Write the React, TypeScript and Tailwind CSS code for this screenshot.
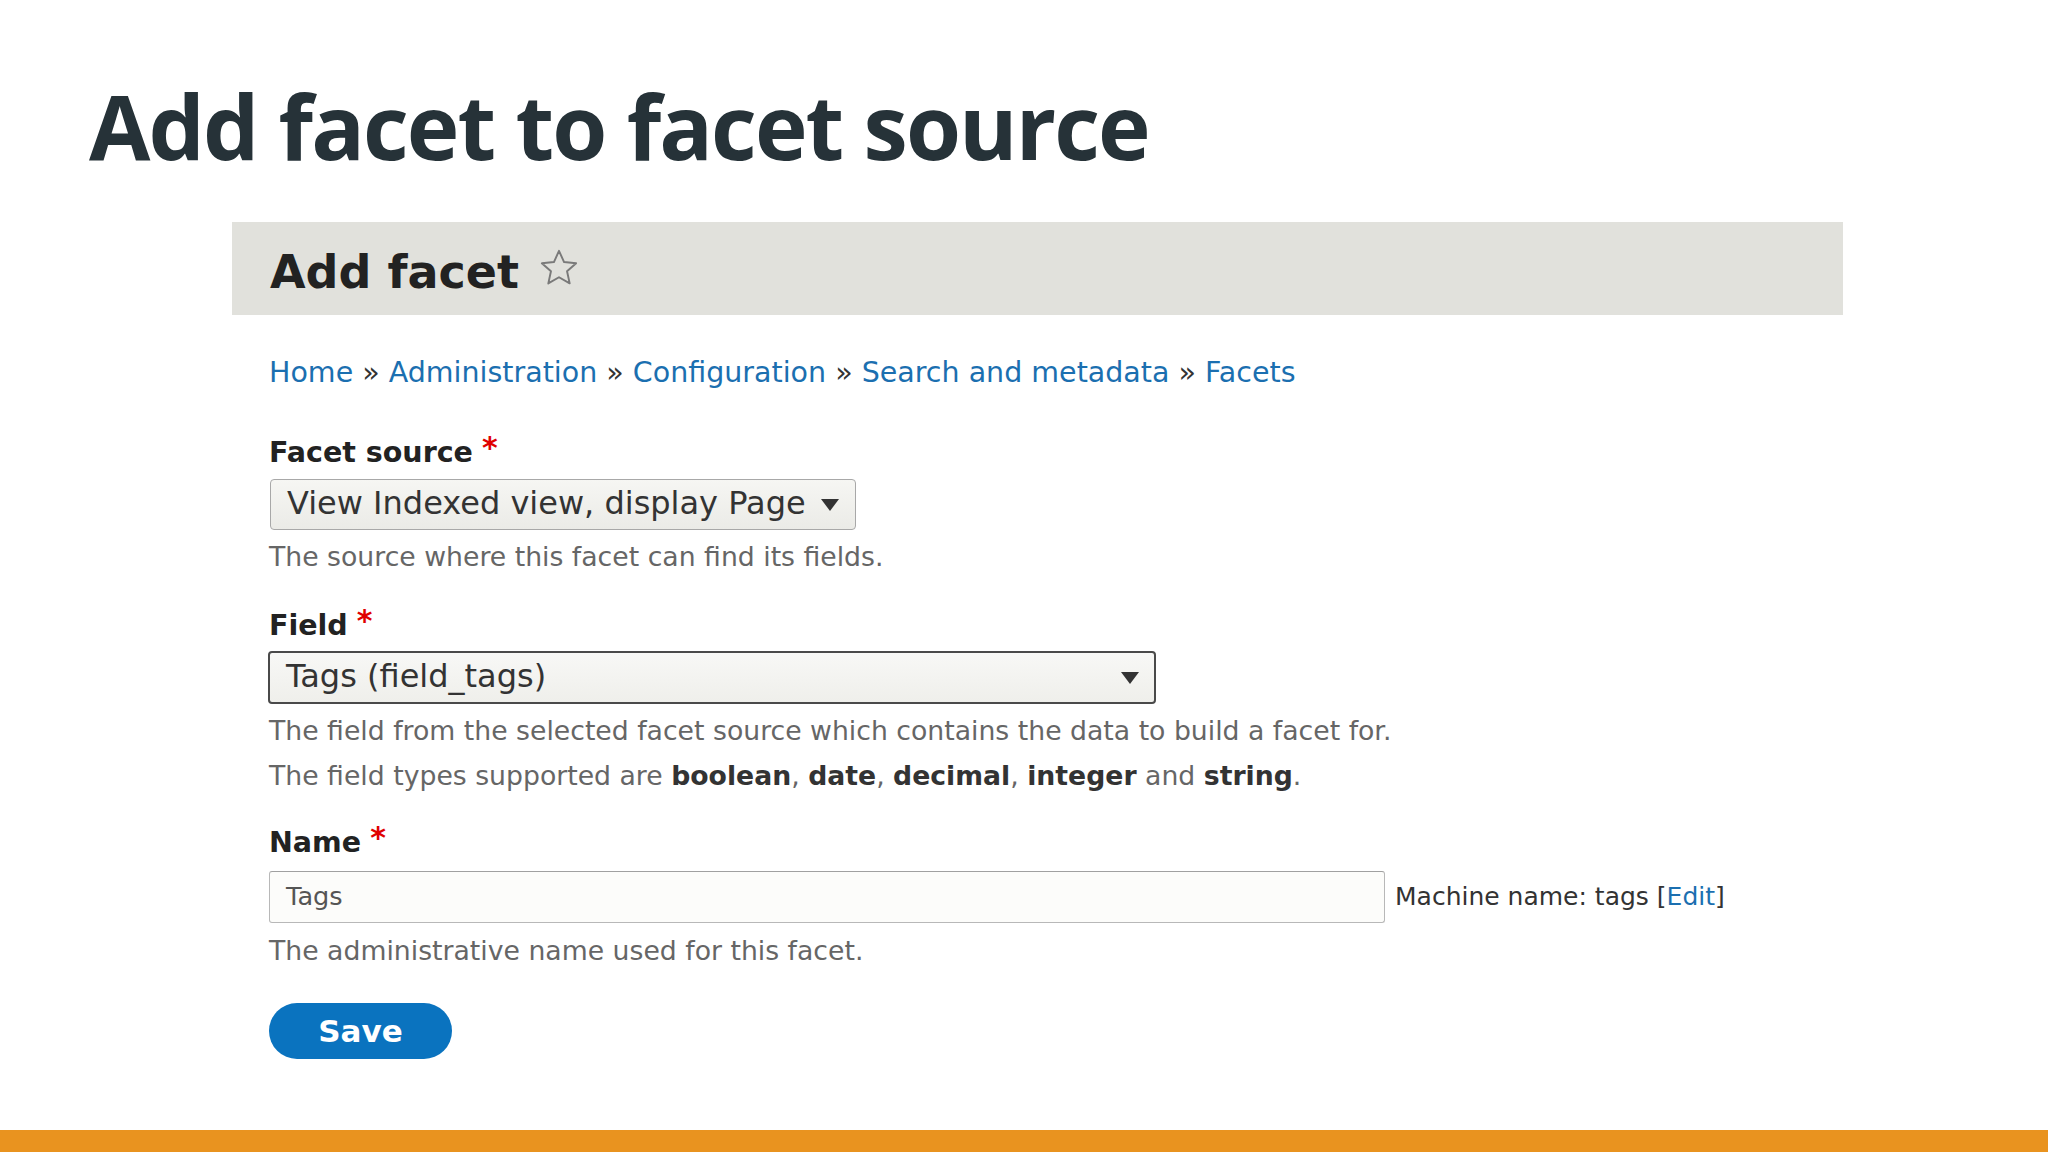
import React from "react";

const dv = "font-['DejaVu_Sans',sans-serif]";

const Required = () => (
  <span className="ml-[9px] text-[30px] leading-[28px] text-[#e00000] relative -top-[5px]">*</span>
);

const Arrow = () => (
  <svg width="20" height="14" viewBox="0 0 20 14" className="shrink-0">
    <path d="M1 1 L19 1 L10 13 Z" fill="#333" />
  </svg>
);

export default function App() {
  return (
    <div className="w-[2048px] h-[1152px] bg-white flex flex-col overflow-hidden">
      <h1 className="pl-[89px] pt-[81px] text-[89px] leading-[89px] tracking-[-1.9px] font-bold text-[#263238] font-['Open_Sans',sans-serif]">
        Add facet to facet source
      </h1>

      <div className={`ml-[232px] mt-[52px] w-[1611px] h-[93px] bg-[#e1e1dc] pl-[38px] pt-[27px] flex items-start ${dv}`}>
        <span className="text-[46px] leading-[46px] font-bold text-[#222]">Add facet</span>
        <svg width="42" height="42" viewBox="0 0 24 24" className="ml-[19px] -mt-[2px]">
          <path
            d="M12 2.2 L14.9 8.6 L21.8 9.3 L16.6 13.9 L18.1 20.8 L12 17.3 L5.9 20.8 L7.4 13.9 L2.2 9.3 L9.1 8.6 Z"
            fill="none"
            stroke="#7a7a7a"
            strokeWidth="1.1"
            strokeLinejoin="round"
          />
        </svg>
      </div>

      <div className={`ml-[232px] w-[1611px] pl-[37px] flex flex-col items-start ${dv}`}>
        <nav className="mt-[44px] text-[28.5px] leading-[28.5px] text-[#333]">
          <a className="text-[#1b6fb0]">Home</a> » <a className="text-[#1b6fb0]">Administration</a> »{" "}
          <a className="text-[#1b6fb0]">Configuration</a> » <a className="text-[#1b6fb0]">Search and metadata</a> »{" "}
          <a className="text-[#1b6fb0]">Facets</a>
        </nav>

        <label className="mt-[51px] h-[28.5px] text-[28.5px] leading-[28.5px] font-bold text-[#222] flex items-start">
          Facet source
          <Required />
        </label>
        <div className="mt-[12px] ml-[1px] w-[586px] h-[51px] rounded-[4px] border border-[#a8a8a8] bg-gradient-to-b from-[#f6f6f3] to-[#ebebe7] flex items-center pl-[16px] pr-[15px] pb-[4px]">
          <span className="flex-1 text-[32px] leading-none text-[#333]">View Indexed view, display Page</span>
          <span className="pt-[4px]"><Arrow /></span>
        </div>
        <p className="mt-[14px] text-[26.7px] leading-[26.7px] text-[#666]">The source where this facet can find its fields.</p>

        <label className="mt-[41px] h-[28.5px] text-[28.5px] leading-[28.5px] font-bold text-[#222] flex items-start">
          Field
          <Required />
        </label>
        <div className="mt-[11px] -ml-[1px] w-[888px] h-[53px] rounded-[4px] border-2 border-[#4a4a4a] bg-gradient-to-b from-[#f8f8f6] to-[#efefeb] flex items-center pl-[16px] pr-[14px] pb-[3px]">
          <span className="flex-1 text-[32px] leading-none text-[#333]">Tags (field_tags)</span>
          <span className="pt-[4px]"><Arrow /></span>
        </div>
        <div className="mt-[4px] text-[26.7px] leading-[45px] text-[#666]">
          <div>The field from the selected facet source which contains the data to build a facet for.</div>
          <div>
            The field types supported are <b className="text-[#333]">boolean</b>, <b className="text-[#333]">date</b>,{" "}
            <b className="text-[#333]">decimal</b>, <b className="text-[#333]">integer</b> and{" "}
            <b className="text-[#333]">string</b>.
          </div>
        </div>

        <label className="mt-[31px] h-[28.5px] text-[28.5px] leading-[28.5px] font-bold text-[#222] flex items-start">
          Name
          <Required />
        </label>
        <div className="mt-[13px] flex items-center">
          <div className="w-[1116px] h-[52px] rounded-[3px] border border-[#b8b8b8] border-t-[#a0a0a0] bg-[#fcfcfa] flex items-center pl-[16px]">
            <span className="text-[25.6px] leading-none text-[#555]">Tags</span>
          </div>
          <span className="ml-[10px] text-[25px] leading-none text-[#333]">
            Machine name: tags [<a className="text-[#1b6fb0]">Edit</a>]
          </span>
        </div>
        <p className="mt-[15px] text-[26.7px] leading-[26.7px] text-[#666]">The administrative name used for this facet.</p>

        <button className="mt-[39px] w-[183px] h-[56px] rounded-full bg-[#0a73bf] text-white text-[31px] font-bold leading-none flex items-center justify-center">
          Save
        </button>
      </div>

      <div className="mt-auto h-[22px] w-full bg-[#e9931f]" />
    </div>
  );
}
